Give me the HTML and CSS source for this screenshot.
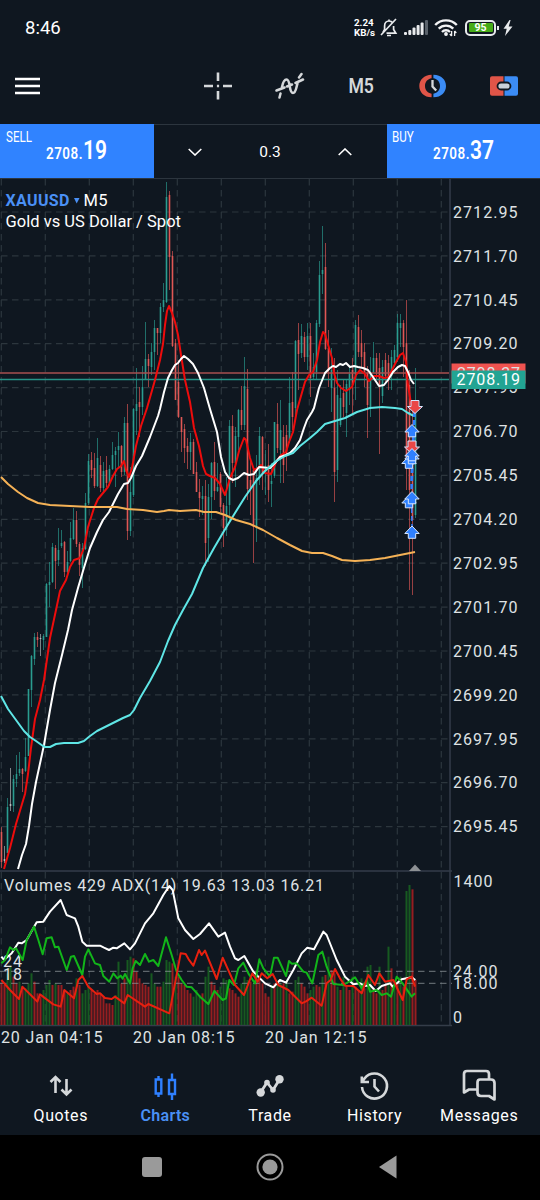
FILE: index.html
```html
<!DOCTYPE html>
<html lang="en">
<head>
<meta charset="UTF-8">
<meta name="viewport" content="width=device-width, initial-scale=1.0">
<title>XAUUSD M5 - Charts</title>
<link rel="stylesheet" href="styles.css">
</head>
<body>

<header class="status-bar">
    <span class="clock">8:46</span>
    <div class="status-icons">
        <div class="net-speed"><span>2.24</span><span>KB/s</span></div>
        <svg class="bell" width="18" height="20" viewBox="0 0 18 20" fill="none" stroke="#e8eaec" stroke-width="1.7">
            <path d="M3.2 14.5V14L4.600 11.500V8C4.600 5 6.500 3 9 3C10.800 3 12 3.800 12.800 5M13.600 8V11.500L15.800 15.200H6.500M16 1L1 17M7 17.500H11M9 3V1.500"/>
        </svg>
        <svg width="25" height="20" viewBox="0 0 25 20" fill="#e8eaec">
            <rect x="0" y="14" width="3" height="3" rx="1"/>
            <rect x="4.300" y="12" width="3" height="5" rx="1"/>
            <rect x="8.500" y="9.500" width="3" height="7.500" rx="1"/>
            <rect x="12.600" y="7" width="3" height="10" rx="1"/>
            <rect x="16.600" y="4.500" width="3" height="12.500" rx="1"/>
            <rect x="21" y="2" width="3" height="15" rx="1" fill="#59616a"/>
        </svg>
        <svg class="wifi" width="24" height="20" viewBox="0 0 24 20" fill="none" stroke="#f2f3f4" stroke-width="2.4">
            <path d="M1.200 7A15 15 0 0 1 22.800 7M4.700 10.700A10.300 10.300 0 0 1 19.300 10.700M8 14A5.600 5.600 0 0 1 16 14"/>
            <circle cx="12" cy="16" r="1.200" fill="#fff" stroke-width="1.400"/>
            <path d="M17.600 13V18M17.600 18L15.800 16M20.600 18V13M20.600 13L22.300 15" stroke-width="1.300"/>
        </svg>
        <div class="battery"><span>95</span></div>
        <svg width="10" height="16" viewBox="0 0 10 16" fill="#e8eaec"><path d="M6.500 0L.5 8.700H3.700L2 16L9.500 6.600H5.700L7.600 0Z"/></svg>
    </div>
</header>

<div class="toolbar">
    <svg class="menu" width="26" height="18" viewBox="0 0 26 18" stroke="#fff" stroke-width="2.700"><path d="M0 2H25M0 9H25M0 16H25"/></svg>
    <div class="tools">
        <svg width="30" height="30" viewBox="0 0 30 30" stroke="#d5d8da" stroke-width="2.600"><path d="M1 15H10M20 15H29M15 1.500V10M15 20V28.500M13.900 15H16.100"/></svg>
        <svg width="30" height="30" viewBox="0 0 30 30" fill="none" stroke="#d5d8da" stroke-width="2.500" stroke-linecap="round">
            <path d="M1.500 19.500L9.500 16.500M12 15.500L17 13.500M20.500 12L28 8.500M4.500 26.500L5.500 22.500M7 16C8 11 9.500 8.500 11.500 8.500C16 8.500 13.500 22 18 22C21 22 21 17 22.500 12.500M24 6.500L26.500 3"/>
        </svg>
        <span class="timeframe">M5</span>
        <svg width="30" height="30" viewBox="0 0 30 30">
            <path d="M13.600 3.700C6 3.700 1.300 9 1.300 15S6 26.300 13.600 26.300V22.700C9.500 22 7 19 7 15S9.500 8 13.600 7.300Z" fill="#e05548"/>
            <path d="M15.400 3.700C23.500 3.700 28 9 28 15S23.500 26.300 15.400 26.300V22.700C19.500 22 22 19 22 15S19.500 8 15.400 7.300Z" fill="#3b8cf5"/>
            <path d="M14.500 9V15.500L18.200 19.500" fill="none" stroke="#d5d8da" stroke-width="2.300"/>
        </svg>
        <svg width="30" height="30" viewBox="0 0 30 30">
            <path d="M3 5.300H14.500V24.700H3Q1 24.700 1 22.700V7.300Q1 5.300 3 5.300Z" fill="#e05548"/>
            <path d="M15.500 5.300H27Q29 5.300 29 7.300V22.700Q29 24.700 27 24.700H15.500Z" fill="#3b8cf5"/>
            <rect x="8.500" y="11.500" width="13" height="7" rx="3.500" fill="#c9d0d8" stroke="#0f1720" stroke-width="1.800"/>
        </svg>
    </div>
</div>

<div class="trade-bar">
    <div class="deal">
        <span class="side">SELL</span>
        <span class="price">2708.<b>19</b></span>
    </div>
    <div class="volume">
        <svg width="14" height="8" viewBox="0 0 14 8" fill="none" stroke="#fff" stroke-width="1.600"><path d="M.7 1L7 7L13.300 1"/></svg>
        <span>0.3</span>
        <svg width="14" height="8" viewBox="0 0 14 8" fill="none" stroke="#fff" stroke-width="1.600"><path d="M.7 7L7 1L13.300 7"/></svg>
    </div>
    <div class="deal buy">
        <span class="side">BUY</span>
        <span class="price">2708.<b>37</b></span>
    </div>
</div>

<svg class="chart" id="chart" width="540" height="873" viewBox="0 179 540 873">
    <defs>
        <clipPath id="plot"><rect x="0" y="179" width="449" height="691"/></clipPath>
        <path id="up" d="M0 0L7.200 7.500H3.700V12.300H-3.700V7.500H-7.200Z"/>
        <path id="down" d="M0 13L7.500 6H4V0H-4V6H-7.500Z"/>
    </defs>
    <g id="grid" class="grid"></g>
    <path class="frame" d="M450 179V1026M0 871H452M0 1025.500H452"/>
    <path d="M415 864.500L421 871H409Z" fill="#8d9194"/>

    <g clip-path="url(#plot)">
        <g id="candles"></g>
        <path d="M0 373H450" stroke="#a8504f" stroke-width="1.600"/>
        <path d="M0 379.500H450" stroke="#279387" stroke-width="1.300"/>
        <polyline class="line ma-red" points="4,869 10,848 16,824 22,804 25,794 28,774 31,748 35,719 40,700 44,680 48,652 50,638 56,610 60,591 66,580 70,567 74,560 80,558 84,548 88,527 94,508 98,499 103,493 108,487 113,476 117,469 121,466 124,461 126,470 129,477 132,468 136,446 141,426 147,408 155,380 160,360 163,344 165,325 167,311 169,306 172,313 175,322 178,335 181,355 185,380 190,402 194,428 199,446 203,466 206,474 210,476 215,478 220,484 225,495 228,485 230,478 235,467 239,451 244,438 246,440 250,458 254,470 258,468 261,465 265,473 271,474 276,462 281,455 286,452 289,442 293,432 297,410 305,382 309,375 313,372 317,360 320,342 323,332 325,334 329,348 332,358 334,373 337,383 341,388 346,391 352,387 356,375 360,370 365,374 369,381 374,376 379,376 384,378 389,377 392,370 396,362 400,355 403,353 406,362 408,385 412,410"/>
        <polyline class="line ma-white" points="18,869 22,855 26,844 29,826 32,804 36,782 44,745 50,710 55,683 62,655 68,630 72,610 78,588 83,571 90,548 97,532 103,520 109,512 118,494 124,484 128,483 131,478 136,466 142,456 150,437 158,416 160,409 164,392 168,378 172,370 175,365 178,363 181,359 184,356 188,359 193,364 198,373 204,388 210,409 217,432 221,457 225,472 229,478 233,480 238,478 244,473 249,475 254,474 259,467 270,468 275,463 280,457 286,455 290,453 295,448 300,440 304,428 307,420 312,412 314,408 319,388 325,373 330,368 333,366 336,367 340,364 343,365 346,363 350,367 354,366 358,367 363,368 368,370 373,377 379,386 384,385 388,380 393,372 398,367 402,365 405,366 408,372 411,380 414,384"/>
        <polyline class="line ma-cyan" points="1,696 8,709 16,720 24,731 30,737 36,741 43,746 45,747 50,747 56,744 64,743 78,743 84,741 90,736 97,731 105,727 115,722 123,718 130,715 134,710 140,698 150,681 160,662 168,641 175,625 183,610 192,594 203,568 214,548 224,531 235,513 245,497 256,481 265,471 275,462 285,456 293,453 300,446 310,438 317,432 325,424 335,421 345,418 357,412 370,408 382,407 395,408 402,409 408,413 414,416"/>
        <polyline class="line ma-orange" points="1,477 8,484 18,492 27,498 38,503 50,505 70,506 90,507 117,507 127,509 143,510 157,512 164,511 169,510 180,511 196,510 204,512 216,512 225,515 236,520 250,524 263,530 277,538 290,545 302,551 312,553 323,553 332,556 342,560 355,561 370,560 385,558 400,555 415,552"/>

        <path d="M414 412L411 480L412 526M415 412L412 490" stroke="#2f80ff" stroke-width="1.500" stroke-dasharray="5 3" fill="none"/>
        <g class="marks">
            <use href="#down" class="sell" x="415" y="400.500"/>
            <use href="#up" x="412" y="424.500"/>
            <use href="#down" class="sell" x="412" y="441"/>
            <use href="#up" x="409" y="456"/>
            <use href="#up" x="412" y="451.500"/>
            <use href="#up" x="412" y="448.500"/>
            <use href="#up" x="409" y="495.500"/>
            <use href="#up" x="412" y="491.500"/>
            <use href="#up" x="412" y="526"/>
        </g>
    </g>

    <text class="symbol" x="5.500" y="206" textLength="64">XAUUSD</text>
    <path d="M74 198H79.500L76.700 203.500Z" fill="#4a90f5"/>
    <text class="title" x="83.500" y="206" textLength="24">M5</text>
    <text class="title" x="5.500" y="226.500" textLength="175.500">Gold vs US Dollar / Spot</text>

    <g id="prices" class="axis"></g>
    <rect x="451.500" y="363.500" width="74" height="20" fill="#ef5350"/>
    <text class="axis" x="457" y="379" textLength="63">2708.37</text>
    <rect x="451.500" y="370.500" width="74" height="18.500" fill="#22a493"/>
    <text class="axis tag" x="456.500" y="385.300" textLength="63.500">2708.19</text>

    <!-- volumes and ADX pane -->
    <g id="volumes"></g>
    <path class="level" d="M0 971.300H452M0 983.300H452"/>
    <text class="axis" x="4" y="891.300" textLength="320">Volumes 429 ADX(14) 19.63 13.03 16.21</text>
    <text class="axis" x="3" y="967" textLength="19">24</text>
    <text class="axis" x="3" y="979.700" textLength="19">18</text>
    <g transform="translate(0 860) scale(.33333)">
        <polyline class="line adx" points="4,290 12,300 35,280 55,248 65,250 80,240 110,187 130,185 150,155 182,120 200,165 210,169 225,175 235,200 247,245 260,257 300,257 312,263 327,270 340,263 350,265 373,250 390,268 405,250 435,190 460,160 490,105 508,78 518,90 535,175 555,210 580,237 600,222 627,190 655,230 675,218 690,260 705,295 715,300 733,288 760,335 795,370 820,382 840,360 858,368 880,330 905,280 922,263 942,268 970,215 980,225 1010,300 1035,350 1060,373 1080,370 1095,378 1110,375 1127,393 1145,378 1170,370 1178,380 1205,358 1235,352 1246,360"/>
        <polyline class="line di-plus" points="4,310 15,300 30,262 40,270 48,265 68,300 80,240 102,200 115,240 128,283 140,235 155,232 165,262 175,260 200,330 213,290 222,288 247,345 255,290 265,268 285,310 300,315 310,348 328,365 340,340 352,355 362,347 368,356 375,342 390,370 398,325 407,303 420,315 435,282 447,305 460,300 475,318 498,232 515,285 530,335 545,360 560,380 575,382 600,410 625,432 643,393 668,420 678,415 688,360 702,375 715,325 730,308 745,340 765,370 778,298 790,325 810,350 822,293 833,293 858,348 867,303 875,311 890,310 910,335 920,338 937,370 955,285 967,275 980,320 1000,372 1030,375 1052,362 1065,352 1085,385 1100,360 1110,395 1130,390 1145,405 1160,400 1173,410 1190,350 1208,370 1235,410 1245,400"/>
        <polyline class="line di-minus" points="4,360 30,390 57,417 67,380 90,403 112,425 120,403 140,418 160,433 182,440 193,390 222,415 235,360 247,348 265,380 290,402 300,400 315,414 335,417 345,410 373,430 383,405 435,440 445,432 508,460 525,370 542,280 557,282 566,298 580,317 597,270 605,285 615,272 650,357 668,293 705,375 732,405 757,340 773,365 785,340 802,355 818,342 835,375 865,390 905,430 918,424 935,413 965,437 980,370 992,360 1005,327 1020,355 1035,377 1060,378 1085,400 1105,345 1125,375 1138,340 1155,365 1180,360 1208,420 1220,358 1235,350 1245,380"/>
    </g>
    <g class="axis">
        <text x="453.500" y="887" textLength="39">1400</text>
        <text x="453" y="976.800" textLength="44.500">24.00</text>
        <text x="453" y="989" textLength="44.500">18.00</text>
        <text x="453" y="1022.500">0</text>
        <text x="1" y="1043.300" textLength="101.500">20 Jan 04:15</text>
        <text x="133" y="1043.300" textLength="101.500">20 Jan 08:15</text>
        <text x="265" y="1043.300" textLength="101.500">20 Jan 12:15</text>
    </g>
</svg>

<nav class="tabs">
    <a class="tab">
        <svg width="36" height="36" viewBox="0 0 36 36" fill="none" stroke="#d5d8da" stroke-width="2.600"><path d="M12.500 25V9M7.500 14L12.500 9L17.500 14M23.500 11V27M18.500 21.500L23.500 26.500L28.500 21.500"/></svg>
        <span>Quotes</span>
    </a>
    <a class="tab active">
        <svg width="36" height="36" viewBox="0 0 36 36" fill="none" stroke="#2f80ff" stroke-width="2.400"><path d="M8.700 11.500H14.300V25.500H8.700ZM11.500 8V12M11.500 25V29M22 12H28V26H22ZM25 5.500V12M25 26V32"/></svg>
        <span>Charts</span>
    </a>
    <a class="tab">
        <svg width="36" height="36" viewBox="0 0 36 36" fill="none" stroke="#d5d8da" stroke-width="2.800" stroke-linejoin="round"><path d="M8.500 24.500L15 14.500L21 22L27.500 11.500"/><g fill="#d5d8da" stroke="none"><circle cx="8.700" cy="24.500" r="4.200"/><circle cx="27.500" cy="11.300" r="4.200"/><circle cx="15" cy="14.500" r="2.800"/><circle cx="21" cy="22" r="2.800"/></g></svg>
        <span>Trade</span>
    </a>
    <a class="tab">
        <svg width="36" height="36" viewBox="0 0 36 36" fill="none" stroke="#d5d8da" stroke-width="2.600"><path d="M5 19A12.500 12.500 0 1 0 7.500 10.500L5 14M4.800 8.500V14H12M17.500 11V18.500L22 23.500"/></svg>
        <span>History</span>
    </a>
    <a class="tab">
        <svg width="36" height="36" viewBox="0 0 36 36" fill="none" stroke="#d5d8da" stroke-width="2.700" stroke-linejoin="round"><path d="M28 11V6Q28 3 25 3H6Q3 3 3 6V24.500L8 21.500H16M19 11.500H30Q33.500 11.500 33.500 15V31.500L28 28H20Q16.500 28 16.500 24.500V14.500Q16.500 11.500 19 11.500Z"/></svg>
        <span>Messages</span>
    </a>
</nav>

<footer class="system-nav">
    <svg width="20" height="20" viewBox="0 0 20 20"><rect width="20" height="20" rx="3" fill="#9a9a9a"/></svg>
    <svg width="28" height="28" viewBox="0 0 28 28"><circle cx="14" cy="14" r="12.500" fill="none" stroke="#9a9a9a" stroke-width="2"/><circle cx="14" cy="14" r="7.600" fill="#9a9a9a"/></svg>
    <svg width="20" height="24" viewBox="0 0 20 24"><path d="M1 12L18.500 .5V23.500Z" fill="#9a9a9a"/></svg>
</footer>

<script src="chart.js"></script>
</body>
</html>
```
FILE: styles.css
```css
* {
    margin: 0;
    padding: 0;
    box-sizing: border-box;
}
body {
    width: 540px;
    height: 1200px;
    overflow: hidden;
    background: #0f1720;
    color: #fff;
    font-family: Roboto, "Liberation Sans", sans-serif;
}
svg {
    display: block;
}

/* Status bar */
.status-bar {
    display: flex;
    justify-content: space-between;
    align-items: center;
    height: 55px;
    padding: 0 27px 0 25px;
}
.clock {
    font-size: 18.5px;
    font-weight: 400;
}
.status-icons {
    display: flex;
    align-items: center;
}
.net-speed {
    display: flex;
    flex-direction: column;
    width: 21px;
    margin-right: 5px;
    font-size: 9.8px;
    font-weight: 700;
    line-height: 9.5px;
    white-space: nowrap;
}
.bell {
    margin-right: 6px;
}
.wifi {
    margin: 0 7px 0 5px;
}
.battery {
    position: relative;
    width: 31px;
    height: 16px;
    margin-right: 7px;
    padding: 1.5px;
    border: 2px solid #e8eaec;
    border-radius: 5px;
}
.battery span {
    display: block;
    height: 9px;
    background: #46ab17;
    border-radius: 1px;
    font-size: 10.5px;
    font-weight: 700;
    line-height: 9.5px;
    text-align: center;
}
.battery::after {
    content: "";
    position: absolute;
    top: 4px;
    right: -4.5px;
    width: 2px;
    height: 4px;
    background: #e8eaec;
}

/* Toolbar */
.toolbar {
    display: flex;
    justify-content: space-between;
    align-items: center;
    height: 69px;
    padding: 0 21px 8px 15px;
}
.tools {
    display: flex;
    align-items: center;
    gap: 41.5px;
}
.timeframe {
    width: 30px;
    font-size: 21px;
    font-weight: 600;
    text-align: center;
    color: #d5d8da;
    transform: scaleX(0.84);
}

/* One click trading */
.trade-bar {
    display: flex;
    height: 55px;
    border-bottom: 1px solid #2c353e;
}
.deal {
    width: 153.5px;
    padding: 5px 0 0 5.5px;
    background: #3083ff;
}
.side {
    display: block;
    font-size: 14.5px;
    line-height: 17px;
    transform: scaleX(0.8);
    transform-origin: left;
}
.price {
    display: block;
    margin-left: 40px;
    font-size: 16px;
    font-weight: 600;
    line-height: 22px;
    transform: scaleX(0.84);
    transform-origin: left;
    letter-spacing: 0.6px;
    margin-top: -6px;
}
.price b {
    font-size: 25px;
    font-weight: 600;
    letter-spacing: 0;
}
.buy .price {
    margin-left: 41px;
}
.volume {
    flex: 1;
    display: flex;
    justify-content: space-between;
    align-items: center;
    padding: 0 34px;
    border-top: 1px solid #2c353e;
    font-size: 15.5px;
}

/* Chart */
.grid {
    stroke: #2c363d;
    stroke-width: 1.2;
    stroke-dasharray: 6.5 4.5;
}
.frame {
    fill: none;
    stroke: #343d49;
    stroke-width: 1.5;
}
.level {
    fill: none;
    stroke: #8d9499;
    stroke-width: 0.8;
    stroke-dasharray: 6.5 4.5;
}
.axis {
    font-size: 16px;
    fill: #dfe2e4;
}
.tag {
    fill: #fff;
}
.symbol {
    font-size: 16px;
    font-weight: 700;
    fill: #4a90f5;
}
.title {
    font-size: 16.5px;
    fill: #fff;
}
.line {
    fill: none;
    stroke-width: 2;
    stroke-linejoin: round;
    vector-effect: non-scaling-stroke;
}
.ma-red {
    stroke: #ed0c0c;
}
.ma-white, .adx {
    stroke: #fff;
}
.ma-cyan {
    stroke: #5fe6e6;
}
.ma-orange {
    stroke: #f5b256;
}
.di-plus {
    stroke: #12b51a;
}
.di-minus {
    stroke: #e8200f;
}
.marks {
    fill: #2f80ff;
    stroke: #d6e6ff;
    stroke-width: 1;
}
.marks .sell {
    fill: #ea4747;
}

/* Bottom tabs */
.tabs {
    display: flex;
    height: 83px;
    padding: 16px 8.5px 0;
}
.tab {
    flex: 1;
    display: flex;
    flex-direction: column;
    align-items: center;
    font-size: 16px;
    font-weight: 400;
    letter-spacing: 0.6px;
}
.tab span {
    margin-top: 2px;
}
.tab.active {
    color: #4a90f5;
    font-weight: 600;
    letter-spacing: 0.3px;
}

/* Android navigation */
.system-nav {
    display: flex;
    justify-content: center;
    align-items: center;
    gap: 94px;
    height: 65px;
    padding: 0 1px 1px 0;
    background: #000;
}
```
FILE: chart.js
```javascript
const NS = "http://www.w3.org/2000/svg";
const STEP = 3;
const X0 = 1.5;

function add(parent, tag, attrs, text) {
    const el = document.createElementNS(NS, tag);
    for (const key in attrs) el.setAttribute(key, attrs[key]);
    if (text) el.textContent = text;
    parent.appendChild(el);
}

// grid and price scale
const grid = document.getElementById("grid");
const prices = document.getElementById("prices");
for (let x = 1.3; x < 450; x += 44) {
    add(grid, "path", { d: `M${x} 179V1025` });
}
for (let i = 0; i < 15; i++) {
    const y = 212 + i * 43.9;
    add(grid, "path", { d: `M1 ${y}H452` });
    add(prices, "text", { x: 453, y: y + 5.7, textLength: 64.5 }, (2712.95 - i * 1.25).toFixed(2));
}

// direction, high, low, body top, body bottom (chart y)
const candles = `r 827 868 832 862|n 846 863 859 861|g 798 853 807 853|n 768 811 804 806|g 775 812 779 806
g 755 787 774 779|g 752 776 769 773|r 768 792 769 774|g 738 772 757 771|g 689 756 689 756
g 655 707 656 690|g 633 665 637 659|r 632 647 637 640|n 634 656 638 639|g 634 650 636 640
g 583 637 584 637|g 562 607 582 585|g 543 583 547 582|r 545 589 548 561|g 528 566 550 560
g 530 548 543 546|r 541 577 542 572|g 551 573 562 572|g 522 562 538 561|g 508 540 520 539
r 511 547 520 544|r 542 576 544 565|g 543 588 548 568|g 493 550 503 549|g 454 505 461 503
r 452 478 460 470|r 453 488 468 486|g 438 487 458 486|r 456 492 465 488|g 462 492 471 488
r 456 487 470 483|g 465 486 469 483|g 442 470 455 469|g 447 487 451 455|g 432 468 446 450
r 445 477 446 472|g 417 475 423 472|r 404 540 423 531|g 467 536 492 531|g 408 497 409 495
g 368 435 404 411|r 387 437 402 407|g 366 415 387 407|g 322 380 359 379|r 354 387 359 366
g 343 375 352 367|g 320 370 328 352|r 328 355 328 333|g 303 343 307 333|g 283 312 300 307
g 182 303 197 302|r 191 290 195 257|r 251 347 256 346|r 339 388 343 400|r 360 418 382 417
r 417 452 417 432|r 424 463 429 448|r 438 469 446 452|g 433 470 442 452|r 439 474 442 474
r 462 492 472 492|r 479 517 492 498|g 486 515 496 499|r 480 566 496 543|g 484 562 497 538
g 462 519 463 497|r 442 500 462 491|g 463 492 487 491|r 472 512 474 507|r 503 547 505 528
g 477 536 506 530|g 420 522 426 505|r 415 483 426 463|g 427 487 436 463|g 409 450 410 437
r 386 430 410 425|g 357 430 386 425|r 369 500 389 489|r 460 515 480 488|r 467 563 470 527
g 455 542 478 527|g 427 485 436 478|r 436 490 437 473|g 450 495 467 472|r 444 502 465 490
g 463 507 481 484|g 422 478 422 476|r 403 453 424 448|g 400 483 430 450|r 425 483 437 465
r 425 471 435 455|g 377 443 403 440|r 372 430 402 417|g 340 418 341 408|r 323 390 340 354
g 324 358 336 353|r 332 362 337 357|g 323 370 336 357|r 323 397 336 378|g 353 380 367 377
g 320 379 323 372|g 261 327 275 324|g 226 294 270 274|r 243 350 267 349|r 330 387 348 370
g 348 412 370 388|r 358 502 388 472|g 370 482 395 470|g 385 427 398 425|r 380 417 393 407
g 380 437 384 413|g 367 405 374 390|r 358 414 370 385|g 320 400 325 380|r 315 357 327 352
r 330 367 343 357|r 343 387 352 372|r 366 438 373 405|g 357 417 374 408|g 342 373 358 372
r 353 380 358 372|r 353 454 368 384|g 360 403 367 396|r 353 383 360 376|r 355 390 363 378
g 350 390 357 376|g 345 367 350 363|g 314 362 323 357|g 314 347 323 328|r 320 377 323 347
r 300 490 343 460|r 370 590 385 490|r 400 595 430 520|g 368 518 402 515`.split(/[|\n]/);

const colors = { g: "#2a9d90", r: "#e05755", n: "#b9bfc0" };
const layer = document.getElementById("candles");
candles.forEach((row, i) => {
    const [dir, high, low, top, bottom] = row.split(" ");
    const x = X0 + i * STEP;
    add(layer, "path", { d: `M${x} ${high}V${low}`, stroke: colors[dir], "stroke-width": 1, opacity: 0.65 });
    add(layer, "path", { d: `M${x} ${top}V${bottom}`, stroke: colors[dir], "stroke-width": 1.6 });
});

// tick volume bars, height in thirds of a pixel
const volumes = `r125 r120 g155 g175 r145 r125 g130 r110 g110 g125 g155 r130 r95 r85 g105 g120 g135 r120 g125 r120
r120 r105 g95 r105 r115 g140 r120 g95 g105 g115 r105 r95 r105 r95 r85 r65 r65 r60 g90 g190
r125 r140 g195 g205 r200 r160 r140 r125 r120 r115 g155 g125 r115 r115 g130 g195 g190 r185 g145 r145
r125 r120 r105 r95 g85 g105 g90 r95 g145 g175 r130 r120 r105 g115 g140 g135 r110 r105 r95 r85
g125 g145 g135 r130 g125 r150 r145 r125 r95 r85 g120 r125 g125 g125 r125 g130 r95 r100 g135 g145
r125 r115 r95 g105 g115 r120 r115 g145 r150 g205 r165 r155 g115 r105 g145 r120 r105 g145 r115 r105
g140 r110 g175 g180 r110 r95 g175 r105 r120 g235 r170 g115 r125 g145 r115 g402 g420 r407 r135`.split(/\s+/);

const bars = document.getElementById("volumes");
volumes.forEach((v, i) => {
    const h = v.slice(1) / 3;
    add(bars, "rect", {
        x: i * STEP + 0.5, y: 1025 - h, width: 2, height: h,
        fill: v[0] === "g" ? "#175a20" : "#961e20"
    });
});
```
